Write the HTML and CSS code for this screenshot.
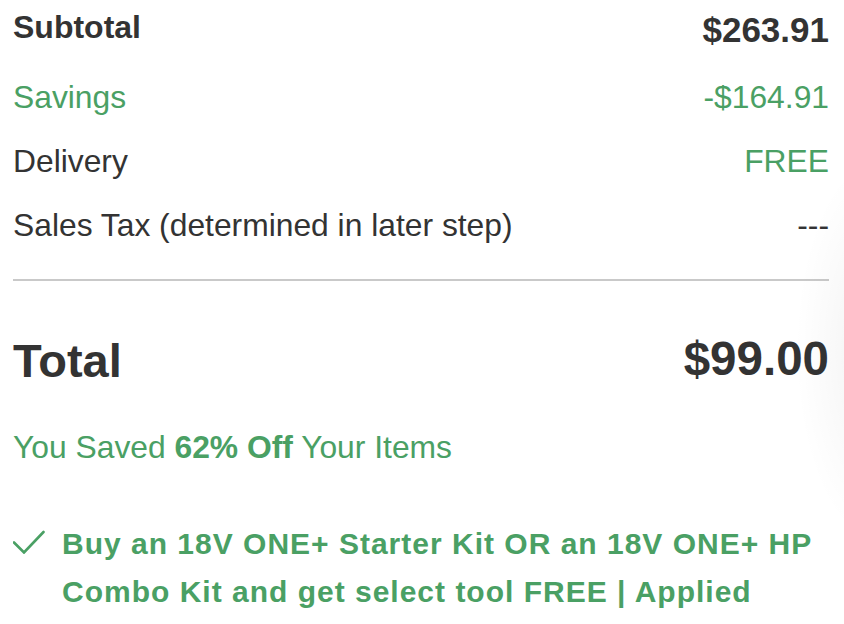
FILE: index.html
```html
<!DOCTYPE html>
<html lang="en">
<head>
<meta charset="utf-8">
<title>Order Summary</title>
<link rel="stylesheet" href="styles.css">
</head>
<body>
<div class="summary">
  <div class="row row-first">
    <span class="label-strong">Subtotal</span>
    <span class="amount-strong">$263.91</span>
  </div>
  <div class="row green">
    <span>Savings</span>
    <span>-$164.91</span>
  </div>
  <div class="row">
    <span>Delivery</span>
    <span class="green">FREE</span>
  </div>
  <div class="row">
    <span>Sales Tax (determined in later step)</span>
    <span>---</span>
  </div>
  <hr class="divider">
  <div class="total">
    <span class="total-label">Total</span>
    <span class="total-amount">$99.00</span>
  </div>
  <p class="saved">You Saved <strong>62% Off</strong> Your Items</p>
  <div class="promo">
    <svg class="check" width="32" height="24" viewBox="0 0 32 24" aria-hidden="true">
      <path d="M1 12.5 L11 22.5 L30.5 2" fill="none" stroke="currentColor" stroke-width="2.6" stroke-linecap="round" stroke-linejoin="miter"/>
    </svg>
    <p class="promo-text">Buy an 18V ONE+ Starter Kit OR an 18V ONE+ HP Combo Kit and get select tool FREE | Applied</p>
  </div>
</div>
<div class="edge-shadow"></div>
</body>
</html>
```

FILE: styles.css
```css
html, body {
  margin: 0;
  padding: 0;
  background: #ffffff;
}

body {
  font-family: "Liberation Sans", Arial, Helvetica, sans-serif;
  color: #333333;
  width: 844px;
  height: 624px;
  overflow: hidden;
  position: relative;
}

.summary {
  padding: 0 15px 0 13px;
}

.row {
  display: flex;
  justify-content: space-between;
  align-items: flex-start;
  font-size: 31.8px;
  line-height: 36px;
  padding: 14px 0;
}

.row-first {
  padding-top: 9px;
  padding-bottom: 17px;
}

.label-strong {
  font-size: 32px;
  font-weight: 700;
}

.amount-strong {
  font-size: 35px;
  font-weight: 700;
  margin-top: 3px;
}

.green {
  color: #4aa064;
}

.divider {
  border: 0;
  height: 2px;
  background: #c9c9c9;
  margin: 22px 0 0 0;
}

.total {
  display: flex;
  justify-content: space-between;
  align-items: flex-start;
  font-weight: 700;
  margin-top: 54px;
}

.total-label {
  font-size: 47px;
  line-height: 52px;
}

.total-amount {
  font-size: 47.5px;
  line-height: 48px;
}

.saved {
  margin: 42px 0 0 0;
  font-size: 31.8px;
  line-height: 36px;
  color: #4aa064;
}

.saved strong {
  font-weight: 700;
}

.promo {
  display: flex;
  align-items: flex-start;
  margin-top: 55px;
  color: #4aa064;
}

.check {
  flex: none;
  margin-top: 10px;
  margin-right: 17px;
}

.promo-text {
  margin: 0;
  font-size: 30px;
  font-weight: 700;
  letter-spacing: 1px;
  line-height: 48px;
  max-width: 780px;
}

.edge-shadow {
  position: absolute;
  right: -40px;
  top: 150px;
  width: 90px;
  height: 400px;
  background: radial-gradient(ellipse at right center, rgba(0,0,0,0.06) 0%, rgba(0,0,0,0.02) 45%, rgba(0,0,0,0) 70%);
  pointer-events: none;
}
```
